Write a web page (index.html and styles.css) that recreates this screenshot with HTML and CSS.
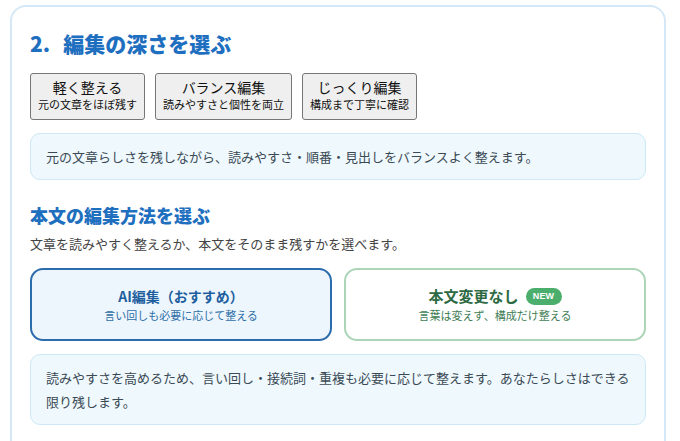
FILE: index.html
```html
<!DOCTYPE html>
<html lang="ja">
<head>
<meta charset="utf-8">
<title>編集の深さを選ぶ</title>
<link rel="stylesheet" href="styles.css">
</head>
<body>
<section class="card">
  <h2 class="step-title"><span class="num">2.</span>編集の深さを選ぶ</h2>
  <div class="depths">
    <button class="depth" type="button"><span class="depth-main">軽く整える</span><span class="depth-sub">元の文章をほぼ残す</span></button>
    <button class="depth" type="button"><span class="depth-main">バランス編集</span><span class="depth-sub">読みやすさと個性を両立</span></button>
    <button class="depth" type="button"><span class="depth-main">じっくり編集</span><span class="depth-sub">構成まで丁寧に確認</span></button>
  </div>
  <p class="note">元の文章らしさを残しながら、読みやすさ・順番・見出しをバランスよく整えます。</p>

  <h3 class="sub-title">本文の編集方法を選ぶ</h3>
  <p class="lead">文章を読みやすく整えるか、本文をそのまま残すかを選べます。</p>
  <div class="modes">
    <div class="mode mode-ai">
      <div class="mode-title">AI編集（おすすめ）</div>
      <div class="mode-sub">言い回しも必要に応じて整える</div>
    </div>
    <div class="mode mode-keep">
      <div class="mode-title">本文変更なし<span class="badge">NEW</span></div>
      <div class="mode-sub">言葉は変えず、構成だけ整える</div>
    </div>
  </div>
  <p class="note note-wide">読みやすさを高めるため、言い回し・接続詞・重複も必要に応じて整えます。あなたらしさはできる限り残します。</p>
</section>
</body>
</html>
```
FILE: styles.css
```css
* { box-sizing: border-box; }
html, body { margin: 0; padding: 0; background: #fff; }
body {
  font-family: "Noto Sans CJK JP", "Noto Sans", sans-serif;
  color: #333;
}
.card {
  margin: 5px 14px 0 10px;
  border: 2px solid #d4e8f7;
  border-radius: 16px;
  padding: 23px 18px 40px;
  background: #fff;
}
.step-title {
  margin: 0;
  font-size: 21px;
  line-height: 27px;
  font-weight: 900;
  color: #1f6fc0;
}
.step-title .num { margin-right: 13px; }
.depths {
  display: flex;
  gap: 10px;
  margin-top: 16px;
}
.depth {
  display: flex;
  flex-direction: column;
  align-items: center;
  padding: 4px 7px 6px;
  border: 1px solid #767676;
  border-radius: 3px;
  background: #efefef;
  color: #111;
  font-family: inherit;
  cursor: pointer;
}
.depth-main { font-size: 14px; line-height: 18px; }
.depth-sub { font-size: 11px; line-height: 17px; }
.note {
  margin: 13px 0 0;
  padding: 11px 10px 11px 15px;
  background: #eef8fd;
  border: 1px solid #cde9f6;
  border-radius: 10px;
  font-size: 13px;
  line-height: 23.4px;
  color: #3b4a55;
}
.sub-title {
  margin: 24px 0 0;
  font-size: 18px;
  line-height: 23px;
  font-weight: 900;
  color: #1f6fbf;
}
.lead {
  margin: 7px 0 0;
  font-size: 13px;
  line-height: 20px;
  color: #444;
}
.modes {
  display: grid;
  grid-template-columns: 1fr 1fr;
  gap: 12px;
  margin-top: 14px;
}
.mode {
  border: 2px solid;
  border-radius: 13px;
  padding: 16px 10px;
  display: flex;
  flex-direction: column;
  align-items: center;
  gap: 1px;
}
.mode-title {
  display: flex;
  align-items: center;
  font-size: 14px;
  line-height: 20px;
  font-weight: 700;
}
.mode-sub { font-size: 11px; line-height: 16px; }
.mode-ai { border-color: #2b6cad; background: #edf6fd; }
.mode-ai .mode-title { color: #1e5e9e; }
.mode-ai .mode-sub { color: #2e6ea8; }
.mode-keep { border-color: #acd5b8; background: #fff; }
.mode-keep .mode-title { color: #2d6a43; font-size: 15px; }
.mode-keep .mode-sub { color: #3e7d54; }
.badge {
  margin-left: 7px;
  display: inline-flex;
  align-items: center;
  justify-content: center;
  width: 36px;
  height: 17px;
  border-radius: 9px;
  background: #4cae6c;
  color: #fff;
  font-family: "Liberation Sans", sans-serif;
  font-size: 9px;
  font-weight: 700;
  letter-spacing: 0.2px;
}
```
